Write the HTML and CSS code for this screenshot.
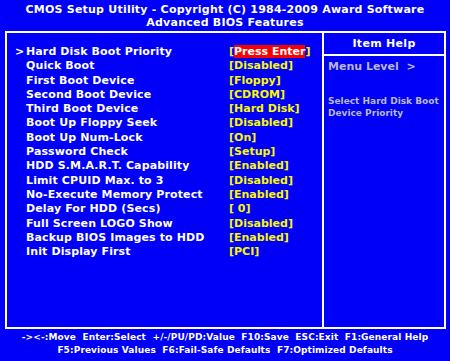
FILE: index.html
```html
<!DOCTYPE html>
<html>
<head>
<meta charset="utf-8">
<link rel="stylesheet" href="styles.css">
</head>
<body>
<div class="screen">
  <header class="title">
    <div>CMOS Setup Utility - Copyright (C) 1984-2009 Award Software</div>
    <div>Advanced BIOS Features</div>
  </header>
  <div class="frame">
    <div class="main">
      <div class="row sel"><span class="mark">&gt;</span><span class="label">Hard Disk Boot Priority</span><span class="val">[<span class="hl">Press Enter</span>]</span></div>
      <div class="row"><span class="mark"></span><span class="label">Quick Boot</span><span class="val">[Disabled]</span></div>
      <div class="row"><span class="mark"></span><span class="label">First Boot Device</span><span class="val">[Floppy]</span></div>
      <div class="row"><span class="mark"></span><span class="label">Second Boot Device</span><span class="val">[CDROM]</span></div>
      <div class="row"><span class="mark"></span><span class="label">Third Boot Device</span><span class="val">[Hard Disk]</span></div>
      <div class="row"><span class="mark"></span><span class="label">Boot Up Floppy Seek</span><span class="val">[Disabled]</span></div>
      <div class="row"><span class="mark"></span><span class="label">Boot Up Num-Lock</span><span class="val">[On]</span></div>
      <div class="row"><span class="mark"></span><span class="label">Password Check</span><span class="val">[Setup]</span></div>
      <div class="row"><span class="mark"></span><span class="label">HDD S.M.A.R.T. Capability</span><span class="val">[Enabled]</span></div>
      <div class="row"><span class="mark"></span><span class="label">Limit CPUID Max. to 3</span><span class="val">[Disabled]</span></div>
      <div class="row"><span class="mark"></span><span class="label">No-Execute Memory Protect</span><span class="val">[Enabled]</span></div>
      <div class="row"><span class="mark"></span><span class="label">Delay For HDD (Secs)</span><span class="val">[&nbsp;0]</span></div>
      <div class="row"><span class="mark"></span><span class="label">Full Screen LOGO Show</span><span class="val">[Disabled]</span></div>
      <div class="row"><span class="mark"></span><span class="label">Backup BIOS Images to HDD</span><span class="val">[Enabled]</span></div>
      <div class="row"><span class="mark"></span><span class="label">Init Display First</span><span class="val">[PCI]</span></div>
    </div>
    <aside class="help">
      <div class="help-head">Item Help</div>
      <div class="help-body">
        <div class="level">Menu Level&nbsp;&nbsp;&gt;</div>
        <div class="desc">Select Hard Disk Boot<br>Device Priority</div>
      </div>
    </aside>
  </div>
  <footer class="keys">
    <div>-&gt;&lt;-:Move&nbsp;&nbsp;Enter:Select&nbsp;&nbsp;+/-/PU/PD:Value&nbsp;&nbsp;F10:Save&nbsp;&nbsp;ESC:Exit&nbsp;&nbsp;F1:General Help</div>
    <div>F5:Previous Values&nbsp;&nbsp;F6:Fail-Safe Defaults&nbsp;&nbsp;F7:Optimized Defaults</div>
  </footer>
</div>
</body>
</html>
```

FILE: styles.css
```css
html, body {
  margin: 0;
  padding: 0;
  background: #0000f8;
}
.screen {
  width: 450px;
  height: 361px;
  background: #0000f8;
  color: #ffffff;
  font-family: "DejaVu Sans", Verdana, sans-serif;
  font-weight: bold;
  font-size: 11px;
  overflow: hidden;
}
.title {
  padding-top: 3px;
  text-align: center;
  line-height: 13px;
  height: 29px;
  box-sizing: border-box;
  letter-spacing: 0.22px;
}
.frame {
  margin: 2px 4px 0 5px;
  height: 298px;
  box-sizing: border-box;
  border: 2px solid #ffffff;
  display: grid;
  grid-template-columns: 1fr 122px;
}
.main {
  padding-top: 12px;
}
.row {
  display: flex;
  height: 14.3px;
  line-height: 14px;
  white-space: nowrap;
}
.mark {
  width: 19px;
  padding-left: 8px;
  box-sizing: border-box;
}
.label {
  width: 203px;
  letter-spacing: 0.12px;
}
.val {
  color: #f8f800;
}
.hl {
  background: #f80000;
  color: #ffffff;
}
.help {
  border-left: 2px solid #ffffff;
  display: flex;
  flex-direction: column;
}
.help-head {
  height: 21px;
  line-height: 21px;
  text-align: center;
  border-bottom: 2px solid #ffffff;
  letter-spacing: 0.3px;
}
.help-body {
  padding: 4px 0 0 4px;
  color: #b8b8d0;
}
.level {
  line-height: 14px;
}
.desc {
  margin-top: 21px;
  font-size: 9px;
  line-height: 12px;
}
.keys {
  padding-top: 2px;
  text-align: center;
  font-size: 9px;
  line-height: 12.5px;
  white-space: nowrap;
  letter-spacing: 0.1px;
}
```
